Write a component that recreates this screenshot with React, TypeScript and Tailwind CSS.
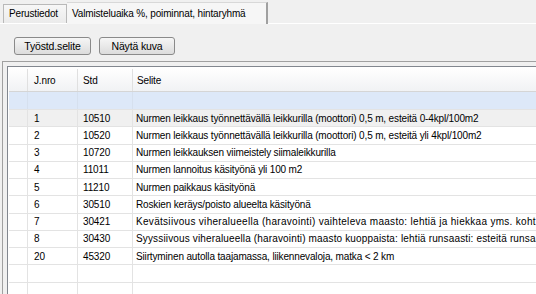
import React from 'react';

const rows = [
  ['1', '10510', 'Nurmen leikkaus työnnettävällä leikkurilla (moottori) 0,5 m, esteitä 0-4kpl/100m2', ''],
  ['2', '10520', 'Nurmen leikkaus työnnettävällä leikkurilla (moottori) 0,5 m, esteitä yli 4kpl/100m2', ''],
  ['3', '10720', 'Nurmen leikkauksen viimeistely siimaleikkurilla', ''],
  ['4', '11011', 'Nurmen lannoitus käsityönä yli 100 m2', ''],
  ['5', '11210', 'Nurmen paikkaus käsityönä', ''],
  ['6', '30510', 'Roskien keräys/poisto alueelta käsityönä', ''],
  ['7', '30421', 'Kevätsiivous viheralueella (haravointi) vaihteleva maasto: lehtiä ja hiekkaa yms. kohtalaisesti', 'tracking-[0.3px]'],
  ['8', '30430', 'Syyssiivous viheralueella (haravointi) maasto kuoppaista: lehtiä runsaasti: esteitä runsaasti', 'tracking-[0.15px]'],
  ['20', '45320', 'Siirtyminen autolla taajamassa, liikennevaloja, matka < 2 km', ''],
];

function Row({ cells, bg }: { cells: string[]; bg: string }) {
  return (
    <div className={`flex shrink-0 h-[17.25px] border-b border-[#e3e3e3] ${bg}`}>
      <div className="w-[19px] shrink-0 border-r border-[#e3e3e3]" />
      <div className="w-[50px] shrink-0 border-r border-[#e3e3e3] pl-[6px] flex items-center">{cells[0]}</div>
      <div className="w-[55px] shrink-0 border-r border-[#e3e3e3] pl-[5px] flex items-center">{cells[1]}</div>
      <div className={`flex-1 min-w-0 pl-[3px] flex items-center whitespace-nowrap overflow-hidden ${cells[3]}`}>{cells[2]}</div>
    </div>
  );
}

export default function App() {
  return (
    <div
      className="w-[536px] h-[294px] bg-[#f0f0f0] overflow-hidden flex flex-col text-[10px] tracking-[-0.15px] text-black"
      style={{ fontFamily: '"Liberation Sans", Arial, sans-serif' }}
    >
      {/* tabs */}
      <div className="flex shrink-0 items-end h-[24px] pl-[3px] border-b border-[#ffffff]">
        <div className="h-[19px] w-[64px] bg-gradient-to-b from-[#f7f7f7] to-[#ebebeb] border border-b-0 border-[#b9b9b9] pl-[5px] pt-[3px] leading-[12px] whitespace-nowrap">
          Perustiedot
        </div>
        <div className="h-[22px] w-[201px] bg-[#f6f6f6] border-r-2 border-t border-[#a0a0a0] border-t-[#d8d8d8] pl-[5px] pt-[5px] leading-[12px] -mb-px whitespace-nowrap">
          Valmisteluaika %, poiminnat, hintaryhmä
        </div>
      </div>

      {/* buttons */}
      <div className="flex shrink-0 gap-[8px] pl-[14px] pt-[13px] h-[37px]">
        <button className="h-[18px] w-[77px] rounded-[3px] border border-[#8a8a8a] bg-gradient-to-b from-[#f6f6f6] to-[#dcdcdc] leading-[14px] text-[10.5px]">
          Työstd.selite
        </button>
        <button className="h-[18px] w-[76px] rounded-[3px] border border-[#8a8a8a] bg-gradient-to-b from-[#f6f6f6] to-[#dcdcdc] leading-[14px] text-[10.5px]">
          Näytä kuva
        </button>
      </div>

      {/* grid frame */}
      <div className="flex-1 min-h-0 ml-[2px] border-l border-t border-[#a0a0a0] pl-[4px] pt-[4px]">
        <div className="h-full border-l border-t border-[#82878f] bg-white">
          <div className="border-l border-t border-white h-full flex flex-col overflow-hidden">
            {/* header */}
            <div className="flex shrink-0 h-[24px] pt-[1px] border-b border-[#d5d5d5] bg-gradient-to-b from-white to-[#f1f2f4]">
              <div className="w-[19px] shrink-0 border-r border-[#e0e0e0]" />
              <div className="w-[50px] shrink-0 border-r border-[#e0e0e0] pl-[6px] flex items-center">J.nro</div>
              <div className="w-[55px] shrink-0 border-r border-[#e0e0e0] pl-[5px] flex items-center">Std</div>
              <div className="flex-1 pl-[4px] flex items-center">Selite</div>
            </div>
            {/* new row */}
            <div className="flex shrink-0 h-[18px] border-b border-[#e3e3e3] bg-[#dde8f8]">
              <div className="w-[19px] shrink-0 border-r border-[#d6e0ee]" />
              <div className="w-[50px] shrink-0 border-r border-[#d6e0ee]" />
              <div className="w-[55px] shrink-0 border-r border-[#d6e0ee]" />
              <div className="flex-1" />
            </div>
            {rows.map((r, i) => (
              <Row key={i} cells={r} bg={i === 0 ? 'bg-[#f0f0f0]' : 'bg-white'} />
            ))}
            <Row cells={['', '', '', '']} bg="bg-white" />
            <Row cells={['', '', '', '']} bg="bg-white" />
          </div>
        </div>
      </div>
    </div>
  );
}
